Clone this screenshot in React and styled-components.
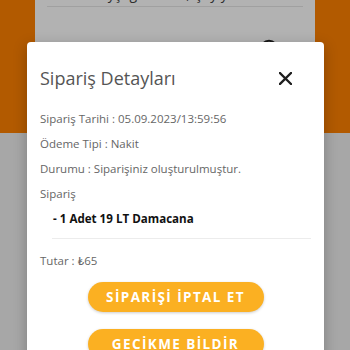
import React from "react";
import styled, { createGlobalStyle } from "styled-components";

const Global = createGlobalStyle`
  html, body { margin: 0; padding: 0; }
  body { font-family: "Open Sans", "Lato", sans-serif; }
`;

const Page = styled.div`
  position: relative;
  width: 350px;
  height: 350px;
  overflow: hidden;
  background: #efefef;
`;

const Header = styled.div`
  height: 133px;
  background: #ff8200;
  padding: 0 35px;
`;

const BgCard = styled.div`
  background: #ffffff;
  height: 120px;
  padding: 0 12px;
  overflow: hidden;
`;

const CutText = styled.div`
  margin-top: -14px;
  height: 16px;
  font-size: 14px;
  line-height: 16px;
  color: #444;
  padding-left: 52px;
  white-space: nowrap;
`;

const BgDivider = styled.div`
  height: 1px;
  background: #e6e6e6;
  margin-top: 4px;
`;

const BgRow = styled.div`
  display: flex;
  justify-content: flex-end;
  padding: 32px 24px 0 0;
`;

const Overlay = styled.div`
  position: absolute;
  inset: 0;
  background: rgba(0, 0, 0, 0.3);
  padding: 42px 0 0 27px;
`;

const Modal = styled.div`
  width: 297px;
  background: #ffffff;
  border-radius: 4px;
  box-shadow: 0 4px 14px rgba(0, 0, 0, 0.25);
  padding: 22px 13px 20px 13px;
  box-sizing: border-box;
  font-family: "Open Sans", "Lato", sans-serif;
`;

const TitleRow = styled.div`
  display: flex;
  align-items: center;
  justify-content: space-between;
  padding-right: 19px;
  height: 28px;
`;

const Title = styled.div`
  font-size: 18px;
  color: #555555;
  font-weight: 400;
`;

const CloseBtn = styled.button`
  border: 0;
  background: transparent;
  padding: 0;
  width: 14px;
  height: 14px;
  display: flex;
  align-items: center;
  justify-content: center;
  cursor: pointer;
`;

const Body = styled.div`
  margin-top: 14px;
`;

const Line = styled.div`
  font-size: ${(p) => (p.$strong ? "11.6px" : "11.5px")};
  line-height: 25px;
  height: 25px;
  color: ${(p) => (p.$strong ? "#111111" : "#666666")};
  font-weight: ${(p) => (p.$strong ? 700 : 400)};
  padding-left: ${(p) => (p.$indent ? "13px" : "0")};
  white-space: nowrap;
`;

const Divider = styled.div`
  height: 1px;
  background: #ececec;
  margin: 7px 0 9px 12px;
`;

const Actions = styled.div`
  display: flex;
  flex-direction: column;
  align-items: center;
  gap: 17px;
  margin-top: 9px;
`;

const Pill = styled.button`
  width: 176px;
  height: 30px;
  border: 0;
  border-radius: 15px;
  background: #fbb022;
  color: #ffffff;
  font-family: inherit;
  font-size: 13.5px;
  font-weight: 700;
  letter-spacing: 1.4px;
  box-shadow: 0 1px 3px rgba(0, 0, 0, 0.2);
  cursor: pointer;
`;

export default function App() {
  return (
    <>
      <Global />
      <Page>
        <Header>
          <BgCard>
            <CutText>Ayşegül Yıldız, Çay yolu</CutText>
            <BgDivider />
            <BgRow>
              <svg width="20" height="20" viewBox="0 0 20 20">
                <circle cx="10" cy="10" r="8.3" fill="none" stroke="#222" strokeWidth="2" />
              </svg>
            </BgRow>
          </BgCard>
        </Header>
        <Overlay>
          <Modal>
            <TitleRow>
              <Title>Sipariş Detayları</Title>
              <CloseBtn aria-label="Kapat">
                <svg width="13" height="13" viewBox="0 0 13 13">
                  <path d="M1 1 L12 12 M12 1 L1 12" stroke="#1e1e1e" strokeWidth="2.3" strokeLinecap="square" />
                </svg>
              </CloseBtn>
            </TitleRow>
            <Body>
              <Line>Sipariş Tarihi : 05.09.2023/13:59:56</Line>
              <Line>Ödeme Tipi : Nakit</Line>
              <Line>Durumu : Siparişiniz oluşturulmuştur.</Line>
              <Line>Sipariş</Line>
              <Line $strong $indent>- 1 Adet 19 LT Damacana</Line>
              <Divider />
              <Line>Tutar : ₺65</Line>
            </Body>
            <Actions>
              <Pill>SİPARİŞİ İPTAL ET</Pill>
              <Pill>GECİKME BİLDİR</Pill>
            </Actions>
          </Modal>
        </Overlay>
      </Page>
    </>
  );
}
